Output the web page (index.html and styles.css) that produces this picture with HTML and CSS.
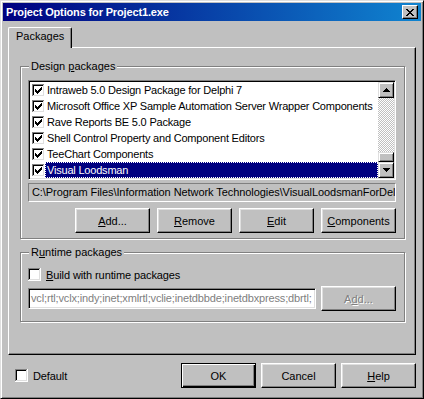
FILE: index.html
```html
<!DOCTYPE html>
<html lang="en">
<head>
    <meta charset="UTF-8">
    <title>Project Options for Project1.exe</title>
    <link rel="stylesheet" href="styles.css">
</head>
<body>
    <svg class="defs" xmlns="http://www.w3.org/2000/svg">
        <symbol id="cb" viewBox="0 0 13 13">
            <rect width="13" height="13" fill="#fff"/>
            <path d="M0 0h12v1H1v11H0z" fill="#808080"/>
            <path d="M1 1h10v1H2v9H1z" fill="#000"/>
            <path d="M11 1h1v11H1v-1h10z" fill="#dfdfdf"/>
        </symbol>
        <symbol id="cb-on" viewBox="0 0 13 13">
            <use href="#cb"/>
            <path d="M3 5h1v3H3zM4 6h1v3H4zM5 7h1v3H5zM6 6h1v3H6zM7 5h1v3H7zM8 4h1v3H8zM9 3h1v3H9z" fill="#000"/>
        </symbol>
    </svg>

    <div class="window">
        <div class="titlebar">
            <span class="title">Project Options for Project1.exe</span>
            <span class="close-btn">
                <svg width="8" height="7" viewBox="0 0 8 7"><path d="M0 0h2v1H0zM6 0h2v1H6zM1 1h2v1H1zM5 1h2v1H5zM2 2h4v1H2zM3 3h2v1H3zM2 4h4v1H2zM1 5h2v1H1zM5 5h2v1H5zM0 6h2v1H0zM6 6h2v1H6z" fill="#000"/></svg>
            </span>
        </div>

        <div class="tabs">
            <div class="tab active">Packages</div>
        </div>

        <div class="tab-page">
            <div class="group design">
                <span class="legend">Design <u>p</u>ackages</span>

                <div class="checklist">
                    <div class="items">
                        <div class="item"><svg class="chk"><use href="#cb-on"/></svg><span class="item-label">Intraweb 5.0 Design Package for Delphi 7</span></div>
                        <div class="item"><svg class="chk"><use href="#cb-on"/></svg><span class="item-label">Microsoft Office XP Sample Automation Server Wrapper Components</span></div>
                        <div class="item"><svg class="chk"><use href="#cb-on"/></svg><span class="item-label">Rave Reports BE 5.0 Package</span></div>
                        <div class="item"><svg class="chk"><use href="#cb-on"/></svg><span class="item-label">Shell Control Property and Component Editors</span></div>
                        <div class="item"><svg class="chk"><use href="#cb-on"/></svg><span class="item-label">TeeChart Components</span></div>
                        <div class="item"><svg class="chk"><use href="#cb-on"/></svg><span class="item-label selected">Visual Loodsman</span></div>
                    </div>
                    <div class="scrollbar">
                        <div class="sb-btn">
                            <svg width="7" height="4" viewBox="0 0 7 4"><path d="M3 0h1v1H3zM2 1h3v1H2zM1 2h5v1H1zM0 3h7v1H0z" fill="#000"/></svg>
                        </div>
                        <div class="sb-track"></div>
                        <div class="sb-thumb"></div>
                        <div class="sb-btn">
                            <svg width="7" height="4" viewBox="0 0 7 4"><path d="M0 0h7v1H0zM1 1h5v1H1zM2 2h3v1H2zM3 3h1v1H3z" fill="#000"/></svg>
                        </div>
                    </div>
                </div>

                <div class="path">C:\Program Files\Information Network Technologies\VisualLoodsmanForDel</div>

                <div class="btn-row">
                    <button class="btn"><u>A</u>dd...</button>
                    <button class="btn"><u>R</u>emove</button>
                    <button class="btn"><u>E</u>dit</button>
                    <button class="btn"><u>C</u>omponents</button>
                </div>
            </div>

            <div class="group runtime">
                <span class="legend">R<u>u</u>ntime packages</span>
                <div class="check-row">
                    <svg class="chk"><use href="#cb"/></svg>
                    <span><u>B</u>uild with runtime packages</span>
                </div>
                <div class="edit-row">
                    <div class="edit">vcl;rtl;vclx;indy;inet;xmlrtl;vclie;inetdbbde;inetdbxpress;dbrtl;</div>
                    <button class="btn" disabled>A<u>d</u>d...</button>
                </div>
            </div>
        </div>

        <div class="footer">
            <div class="check-row footer-check">
                <svg class="chk"><use href="#cb"/></svg>
                <span>Default</span>
            </div>
            <div class="footer-btns">
                <button class="btn default">OK</button>
                <button class="btn">Cancel</button>
                <button class="btn"><u>H</u>elp</button>
            </div>
        </div>
    </div>
</body>
</html>
```

FILE: styles.css
```css
* { margin: 0; padding: 0; box-sizing: border-box; }
body {
    font-family: "Liberation Sans", Arial, sans-serif;
    font-size: 11px;
    background: #c0c0c0;
    color: #000;
}
.defs { position: absolute; width: 0; height: 0; overflow: hidden; }

.window {
    width: 424px;
    height: 399px;
    background: #c0c0c0;
    border: 1px solid;
    border-color: #dfdfdf #000 #000 #dfdfdf;
    box-shadow: inset 1px 1px #fff, inset -1px -1px #808080;
    padding: 2px;
}

.titlebar {
    height: 18px;
    display: flex;
    align-items: center;
    justify-content: space-between;
    padding: 0 3px 0 3px;
    background: linear-gradient(to right, #000080, #1084d0);
    color: #fff;
    font-weight: bold;
}
.title { letter-spacing: -0.15px; }
.close-btn {
    width: 16px;
    height: 14px;
    display: flex;
    align-items: center;
    justify-content: center;
    background: #c0c0c0;
    border: 1px solid;
    border-color: #fff #000 #000 #fff;
    box-shadow: inset -1px -1px #808080;
}
.close-btn svg, .sb-btn svg, .chk { shape-rendering: crispEdges; display: block; }

.tabs { display: flex; margin: 6px 5px 0; }
.tab {
    position: relative;
    z-index: 1;
    width: 64px;
    height: 21px;
    margin-bottom: -1px;
    padding: 2px 0 0 7px;
    line-height: 13px;
    background: #c0c0c0;
    border-left: 1px solid #fff;
    border-top: 1px solid #fff;
    border-right: 1px solid #000;
    border-top-left-radius: 2px;
    border-top-right-radius: 2px;
    box-shadow: inset -1px 0 #808080;
}

.tab-page {
    margin: 0 5px;
    height: 308px;
    border: 1px solid;
    border-color: #fff #000 #000 #fff;
    box-shadow: inset -1px -1px #808080;
    padding: 18px 10px 0 11px;
}

.group {
    position: relative;
    border: 1px solid #808080;
    box-shadow: inset 1px 1px #fff, 1px 1px #fff;
}
.legend {
    position: absolute;
    top: -7px;
    left: 8px;
    padding: 0 2px;
    line-height: 13px;
    background: #c0c0c0;
}
.design { height: 173px; padding: 13px 8px 5px 7px; }
.runtime { height: 70px; margin-top: 13px; padding: 15px 8px 0 7px; }

.checklist {
    display: flex;
    height: 100px;
    background: #fff;
    border: 1px solid;
    border-color: #808080 #fff #fff #808080;
    box-shadow: inset 1px 1px #000, inset -1px -1px #dfdfdf;
    padding: 1px;
}
.items { flex: 1; overflow: hidden; }
.item { display: flex; align-items: center; height: 16px; padding-left: 2px; }
.chk { width: 13px; height: 13px; flex: none; }
.item-label {
    flex: 1;
    height: 16px;
    line-height: 16px;
    padding-left: 2px;
    white-space: nowrap;
    letter-spacing: -0.2px;
}
.item-label.selected {
    background: #000080;
    color: #fff;
    outline: 1px dotted #fff;
    outline-offset: -1px;
}

.scrollbar { width: 16px; display: flex; flex-direction: column; }
.sb-btn, .sb-thumb {
    background: #c0c0c0;
    border: 1px solid;
    border-color: #dfdfdf #000 #000 #dfdfdf;
    box-shadow: inset 1px 1px #fff, inset -1px -1px #808080;
}
.sb-btn { height: 16px; display: flex; align-items: center; justify-content: center; }
.sb-track {
    flex: 1;
    background: repeating-conic-gradient(#c0c0c0 0 25%, #fff 0 50%) 0 0 / 2px 2px;
}
.sb-thumb { height: 10px; }

.path {
    margin-top: 3px;
    height: 19px;
    border: 1px solid;
    border-color: #808080 #fff #fff #808080;
    padding: 0 3px;
    line-height: 17px;
    white-space: nowrap;
    overflow: hidden;
    letter-spacing: -0.07px;
}

.btn {
    width: 75px;
    height: 25px;
    font-family: inherit;
    font-size: 11px;
    color: #000;
    background: #c0c0c0;
    border: 1px solid;
    border-color: #fff #000 #000 #fff;
    box-shadow: inset -1px -1px #808080, inset 1px 1px #dfdfdf;
}
.btn:disabled { color: #808080; text-shadow: 1px 1px #fff; }
.btn.default {
    border-color: #000;
    box-shadow: inset 1px 1px #fff, inset -1px -1px #000, inset -2px -2px #808080;
}
.btn-row { display: flex; justify-content: flex-end; gap: 7px; margin-top: 6px; }

.check-row { display: flex; align-items: center; gap: 5px; height: 13px; letter-spacing: -0.1px; }
.edit-row { display: flex; align-items: center; gap: 5px; margin-top: 5px; }
.edit {
    flex: 1;
    height: 21px;
    background: #fff;
    color: #808080;
    border: 1px solid;
    border-color: #808080 #fff #fff #808080;
    box-shadow: inset 1px 1px #000, inset -1px -1px #dfdfdf;
    padding: 0 2px;
    line-height: 19px;
    white-space: nowrap;
    overflow: hidden;
    letter-spacing: -0.15px;
}

.footer {
    display: flex;
    align-items: center;
    justify-content: space-between;
    height: 25px;
    margin-top: 8px;
    padding: 0 5px 0 12px;
}
.footer-check { gap: 5px; }
.footer-btns { display: flex; gap: 5px; }
```
